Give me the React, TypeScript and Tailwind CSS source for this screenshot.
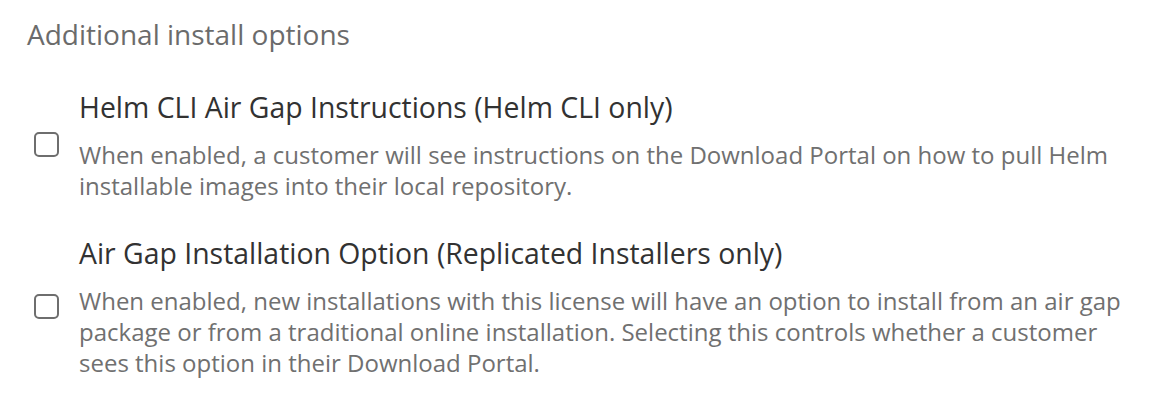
import React from 'react';

const options = [
  {
    title: 'Helm CLI Air Gap Instructions (Helm CLI only)',
    description:
      'When enabled, a customer will see instructions on the Download Portal on how to pull Helm installable images into their local repository.',
  },
  {
    title: 'Air Gap Installation Option (Replicated Installers only)',
    description:
      'When enabled, new installations with this license will have an option to install from an air gap package or from a traditional online installation. Selecting this controls whether a customer sees this option in their Download Portal.',
  },
];

const App = () => {
  return (
    <div className="w-[1154px] h-[410px] bg-white px-[27px] pt-[15px] font-['Open_Sans',sans-serif]">
      <h2 className="text-[28px] leading-[38px] text-[#6b6b6b]">Additional install options</h2>
      <div className="mt-[35px] flex flex-col gap-[33px]">
        {options.map((opt) => (
          <label key={opt.title} className="flex items-center gap-[20px]">
            <input
              type="checkbox"
              className="appearance-none shrink-0 ml-[7px] w-[25px] h-[25px] rounded-[5px] border-2 border-[#6e6e6e] bg-white"
            />
            <div>
              <div className="text-[28.4px] leading-[38px] text-[#323232]">{opt.title}</div>
              <p className="mt-[13px] text-[24px] leading-[31px] text-[#707070] max-w-[1055px]">
                {opt.description}
              </p>
            </div>
          </label>
        ))}
      </div>
    </div>
  );
};

export default App;
